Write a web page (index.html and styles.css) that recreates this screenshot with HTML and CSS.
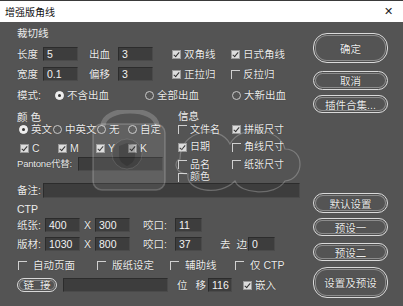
FILE: index.html
```html
<!DOCTYPE html>
<html>
<head>
<meta charset="utf-8">
<link rel="stylesheet" href="styles.css">
</head>
<body>
<div class="win">
  <div class="titlebar">
    <span class="title">增强版角线</span>
    <span class="close">✕</span>
  </div>
  <div class="main">
    <div class="left">
      <div class="row h12 first"><span>裁切线</span></div>

      <div class="row r1">
        <span class="lbl w26">长度</span><span class="field w35">5</span>
        <span class="lbl w29 ml11">出血</span><span class="field w35">3</span>
        <span class="item w59 ml19"><i class="cb on"></i>双角线</span>
        <span class="item"><i class="cb on"></i>日式角线</span>
      </div>
      <div class="row r2">
        <span class="lbl w26">宽度</span><span class="field w35">0.1</span>
        <span class="lbl w29 ml11">偏移</span><span class="field w35">3</span>
        <span class="item w59 ml19"><i class="cb on"></i>正拉归</span>
        <span class="item"><i class="cb"></i>反拉归</span>
      </div>
      <div class="row r3">
        <span class="lbl w38">模式:</span>
        <span class="item w90"><i class="rd on"></i>不含出血</span>
        <span class="item w87"><i class="rd"></i>全部出血</span>
        <span class="item"><i class="rd"></i>大新出血</span>
      </div>

      <div class="mid">
        <div class="colorcol">
          <div class="row h12"><span>颜&nbsp;色</span></div>
          <div class="row h12 pl2">
            <span class="item w34"><i class="rd on"></i>英文</span>
            <span class="item w44"><i class="rd"></i>中英文</span>
            <span class="item w31"><i class="rd"></i>无</span>
            <span class="item"><i class="rd"></i>自定</span>
          </div>
          <div class="row h12 pl3 mt7">
            <span class="item w38"><i class="cb on"></i>C</span>
            <span class="item w38"><i class="cb on"></i>M</span>
            <span class="item w32"><i class="cb on"></i>Y</span>
            <span class="item"><i class="cb on"></i>K</span>
          </div>
          <div class="row h14 mt3">
            <span class="lbl pant">Pantone代替:</span><span class="field w85"></span>
          </div>
        </div>
        <div class="infocol">
          <div class="row h10"><span>信息</span></div>
          <div class="row h12 mt3">
            <span class="item w54"><i class="cb"></i>文件名</span>
            <span class="item"><i class="cb on"></i>拼版尺寸</span>
          </div>
          <div class="row h12 mt6">
            <span class="item w54"><i class="cb on"></i>日期</span>
            <span class="item"><i class="cb"></i>角线尺寸</span>
          </div>
          <div class="row h12 mt6">
            <span class="item w54"><i class="cb"></i>品名</span>
            <span class="item"><i class="cb"></i>纸张尺寸</span>
          </div>
          <div class="row h12 mt1">
            <span class="item w54"><i class="cb"></i>颜色</span>
          </div>
        </div>
      </div>

      <div class="row h15">
        <span class="lbl w26">备注:</span><span class="field w257"></span>
      </div>
      <div class="row h12 mt5"><span>CTP</span></div>
      <div class="row h14 mt3">
        <span class="lbl w28">纸张:</span><span class="field w35">400</span>
        <span class="x w15">X</span><span class="field w35">300</span>
        <span class="lbl w32 ml13">咬口:</span><span class="field w27">11</span>
      </div>
      <div class="row h14 mt5">
        <span class="lbl w28">版材:</span><span class="field w35">1030</span>
        <span class="x w15">X</span><span class="field w35">800</span>
        <span class="lbl w32 ml13">咬口:</span><span class="field w27">37</span>
        <span class="lbl w28 ml18">去<span class="sp6"></span>边:</span><span class="field w27">0</span>
      </div>
      <div class="row h12 mt8 pl1">
        <span class="item w79 g5"><i class="cb"></i>自动页面</span>
        <span class="item w73 g5"><i class="cb"></i>版纸设定</span>
        <span class="item w65 g5"><i class="cb"></i>辅助线</span>
        <span class="item g5"><i class="cb"></i>仅 CTP</span>
      </div>
      <div class="row h14 mt7">
        <span class="pill">链<span class="sp6"></span>接</span>
        <span class="field w105 ml6"></span>
        <span class="lbl w31 ml9">位<span class="sp8"></span>移</span>
        <span class="field w24">116</span>
        <span class="item ml11"><i class="cb on"></i>嵌入</span>
      </div>
    </div>

    <div class="right">
      <div class="btn b1">确定</div>
      <div class="btn b2">取消</div>
      <div class="btn b3">插件合集...</div>
      <div class="btn b4">默认设置</div>
      <div class="btn b5">预设一</div>
      <div class="btn b6">预设二</div>
      <div class="btn b7">设置及预设</div>
    </div>
  </div>

  <svg class="wm-lock" width="80" height="90" viewBox="0 0 80 90">
    <path d="M12 16 C12 -4 66 -4 66 16" fill="none" stroke="rgba(255,255,255,0.2)" stroke-width="5"/>
    <rect x="2" y="14" width="72" height="66" rx="9" fill="rgba(255,255,255,0.08)" stroke="rgba(255,255,255,0.2)" stroke-width="1.5"/>
    <circle cx="36" cy="44" r="15" fill="rgba(0,0,0,0.12)" stroke="rgba(255,255,255,0.12)"/>
    <path d="M28 36 L36 33 L44 36 L44 46 C44 51 40 54 36 56 C32 54 28 51 28 46 Z" fill="rgba(0,0,0,0.15)"/>
  </svg>
  <svg class="wm-swirl" width="140" height="80" viewBox="0 0 140 80">
    <path d="M10 40 C10 10 50 5 60 25 C70 5 110 8 115 30 C135 30 135 60 115 62 C105 78 70 75 65 62 C50 78 15 72 18 55 C5 55 3 42 10 40 Z" fill="none" stroke="rgba(230,230,230,0.28)" stroke-width="1.2"/>
  </svg>
</div>
</body>
</html>
```

FILE: styles.css
```css
* { box-sizing: border-box; }
html, body { margin: 0; padding: 0; }
body {
  width: 403px;
  height: 306px;
  overflow: hidden;
  background: #545454;
  font-family: "Liberation Sans", "Noto Sans CJK SC", sans-serif;
  font-size: 10.5px;
  color: #ececec;
}
.win {
  position: relative;
  width: 403px;
  height: 306px;
  background: #545454;
  border-top: 1px solid #3a3a3a;
}
.titlebar {
  height: 21px;
  background: #ffffff;
  display: flex;
  align-items: center;
  justify-content: space-between;
  padding: 0 10px 0 5px;
  color: #111;
}
.title { font-size: 10px; }
.close { font-size: 11px; color: #222; }

.main {
  display: flex;
  height: 284px;
}
.left {
  width: 300px;
  padding-left: 17px;
  padding-top: 5px;
  display: flex;
  flex-direction: column;
}
.row {
  display: flex;
  align-items: center;
  white-space: nowrap;
  line-height: 1;
}
.h10 { height: 10px; }
.h12 { height: 12px; }
.h14 { height: 14px; }
.h15 { height: 15px; }
.r1 { height: 14px; margin-top: 8px; }
.r2 { height: 14px; margin-top: 6px; }
.r3 { height: 14px; margin-top: 7px; }
.mt1 { margin-top: 1px; }
.mt3 { margin-top: 3px; }
.mt5 { margin-top: 5px; }
.mt6 { margin-top: 6px; }
.mt7 { margin-top: 7px; }
.mt8 { margin-top: 8px; }
.pl1 { padding-left: 1px; }
.pl2 { padding-left: 2px; }
.pl3 { padding-left: 3px; }
.ml6 { margin-left: 6px; }
.ml9 { margin-left: 9px; }
.ml11 { margin-left: 11px; }
.ml13 { margin-left: 13px; }
.ml18 { margin-left: 18px; }
.ml19 { margin-left: 19px; }

.w15 { width: 15px; }
.w24 { width: 24px; }
.w26 { width: 26px; }
.w27 { width: 27px; }
.w28 { width: 28px; }
.w29 { width: 29px; }
.w31 { width: 31px; }
.w32 { width: 32px; }
.w34 { width: 34px; }
.w35 { width: 35px; }
.w38 { width: 38px; }
.w44 { width: 44px; }
.w54 { width: 54px; }
.w59 { width: 59px; }
.w65 { width: 65px; }
.w73 { width: 73px; }
.w79 { width: 79px; }
.w85 { width: 85px; }
.w87 { width: 87px; }
.w90 { width: 90px; }
.w105 { width: 105px; }
.w257 { width: 257px; }

.lbl, .x { flex: none; text-shadow: 0 0 1px #222; }
.x { text-align: center; }
.pant { width: 61px; font-size: 9.5px; letter-spacing: -0.2px; }
.sp6 { display: inline-block; width: 6px; }
.sp8 { display: inline-block; width: 8px; }

.field {
  flex: none;
  align-self: stretch;
  background: #3d3d3d;
  border-top: 1px solid #2c2c2c;
  border-left: 1px solid #2c2c2c;
  border-right: 1px solid #4a4a4a;
  border-bottom: 1px solid #4a4a4a;
  color: #f2f2f2;
  padding-left: 3px;
  display: flex;
  align-items: center;
}

.item {
  flex: none;
  display: flex;
  align-items: center;
  gap: 3px;
  text-shadow: 0 0 1px #222;
}
.item.g5 { gap: 6px; }
.infocol .item { font-size: 10px; }

.cb {
  position: relative;
  flex: none;
  width: 9px;
  height: 9px;
  border-top: 1px solid #d0d0d0;
  border-left: 1px solid #d0d0d0;
}
.cb.on {
  background: #dcdcdc;
  border: 1px solid #9a9a9a;
}
.cb.on::after {
  content: "";
  position: absolute;
  left: 2px;
  top: 0px;
  width: 2px;
  height: 5px;
  border-right: 1.5px solid #333;
  border-bottom: 1.5px solid #333;
  transform: rotate(40deg);
}

.rd {
  position: relative;
  flex: none;
  width: 9px;
  height: 9px;
  border-radius: 50%;
  border: 1px solid #c8c8c8;
}
.rd.on {
  background: #eeeeee;
  border-color: #eeeeee;
}
.rd.on::after {
  content: "";
  position: absolute;
  left: 2px;
  top: 2px;
  width: 3px;
  height: 3px;
  border-radius: 50%;
  background: #333;
}

.mid {
  display: flex;
  height: 72px;
  margin-top: 9px;
}
.colorcol {
  width: 161px;
  display: flex;
  flex-direction: column;
}
.infocol {
  display: flex;
  flex-direction: column;
}

.pill {
  flex: none;
  width: 40px;
  height: 14px;
  border-radius: 7px;
  border: 1px solid #d8d8d8;
  box-shadow: inset 0 0 0 1px #555, inset 0 0 0 2px #8a8a8a;
  display: flex;
  align-items: center;
  justify-content: center;
  text-shadow: 0 0 1px #222;
}

.right {
  display: flex;
  flex-direction: column;
  padding-top: 11px;
  margin-left: 13px;
  width: 75px;
}
.btn {
  flex: none;
  border: 1px solid #dadada;
  border-radius: 10px;
  box-shadow: inset 0 0 0 1px #4e4e4e, inset 0 0 0 2px #8c8c8c;
  display: flex;
  align-items: center;
  justify-content: center;
  text-shadow: 0 0 1px #222;
  white-space: nowrap;
}
.b1 { height: 30px; border-radius: 14px; }
.b2 { height: 19px; margin-top: 8px; }
.b3 { height: 18px; margin-top: 5px; }
.b4 { height: 20px; margin-top: 80px; }
.b5 { height: 18px; margin-top: 5px; }
.b6 { height: 18px; margin-top: 7px; }
.b7 { height: 31px; margin-top: 6px; border-radius: 14px; }

.wm-lock {
  position: absolute;
  left: 91px;
  top: 109px;
  pointer-events: none;
}
.wm-swirl {
  position: absolute;
  left: 170px;
  top: 118px;
  pointer-events: none;
}
```
